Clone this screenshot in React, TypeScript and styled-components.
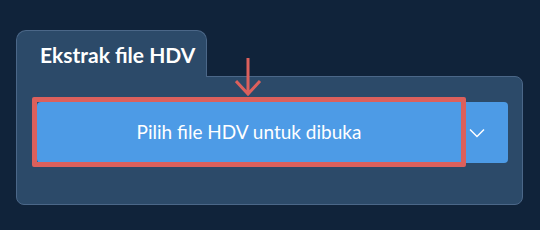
import React from "react";
import styled, { createGlobalStyle } from "styled-components";

const GlobalStyle = createGlobalStyle`
  html, body {
    margin: 0;
    padding: 0;
    background: #10233a;
    font-family: Lato, "Open Sans", sans-serif;
  }
`;

const Page = styled.div`
  width: 540px;
  height: 230px;
  padding: 30px 17px 0 16px;
  box-sizing: border-box;
  background: #10233a;
`;

const Tab = styled.div`
  width: 191px;
  height: 47px;
  box-sizing: border-box;
  background: #2c4a69;
  border: 1px solid #4b6788;
  border-bottom: none;
  border-radius: 10px 10px 0 0;
  margin-bottom: -1px;
  position: relative;
  z-index: 1;
  padding: 11px 0 0 23px;
  color: #ffffff;
  font-weight: 700;
  font-size: 21px;
  line-height: 25px;
`;

const Panel = styled.div`
  height: 129px;
  box-sizing: border-box;
  background: #2c4a69;
  border: 1px solid #4b6788;
  border-radius: 0 8px 8px 8px;
  padding: 25px 14px 0 20px;
`;

const ButtonGroup = styled.div`
  position: relative;
  display: flex;
  height: 61px;
`;

const MainButton = styled.button`
  flex: 1;
  border: none;
  background: #4d9be6;
  color: #ffffff;
  font-family: Lato, "Open Sans", sans-serif;
  font-size: 19px;
  font-weight: 400;
  border-radius: 4px 0 0 4px;
  padding: 0 0 2px;
  cursor: pointer;
`;

const DropButton = styled.button`
  width: 46px;
  border: none;
  background: #4d9be6;
  border-radius: 0 4px 4px 0;
  margin-left: 1px;
  display: flex;
  align-items: center;
  padding: 0 0 0 7px;
  cursor: pointer;
`;

const Highlight = styled.div`
  position: absolute;
  left: -5px;
  top: -5px;
  bottom: -4px;
  width: 434px;
  box-sizing: border-box;
  border: 5px solid #dc605c;
  border-radius: 2px;
  pointer-events: none;
`;

const Pointer = styled.svg`
  position: absolute;
  left: 198px;
  top: -44px;
`;

export default function App() {
  return (
    <Page>
      <GlobalStyle />
      <Tab>Ekstrak file HDV</Tab>
      <Panel>
        <ButtonGroup>
          <MainButton>Pilih file HDV untuk dibuka</MainButton>
          <DropButton>
            <svg width="16" height="10" viewBox="0 0 16 10">
              <path d="M1 1.5 L8 8.5 L15 1.5" fill="none" stroke="#ffffff" strokeWidth="1.5" />
            </svg>
          </DropButton>
          <Highlight />
          <Pointer width="28" height="39" viewBox="0 0 28 39">
            <path d="M13 0 V36 M1 23 L13 36 L25 23" fill="none" stroke="#dc605c" strokeWidth="3" />
          </Pointer>
        </ButtonGroup>
      </Panel>
    </Page>
  );
}
